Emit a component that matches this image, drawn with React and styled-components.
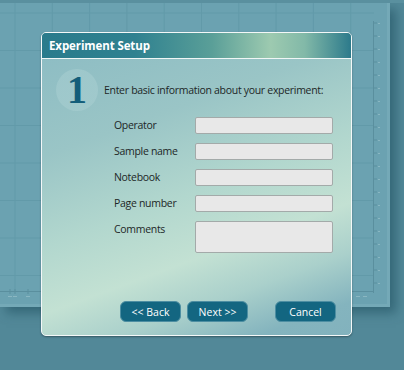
import React from 'react'
import styled, { createGlobalStyle } from 'styled-components'

const GlobalStyle = createGlobalStyle`
  html, body {
    margin: 0;
    padding: 0;
    background: #528898;
    overflow: hidden;
  }
  body {
    font-family: 'Open Sans', 'Noto Sans', sans-serif;
  }
`

const Screen = styled.div`
  position: relative;
  width: 404px;
  height: 370px;
  background: #528898;
  padding-top: 3px;
  box-sizing: border-box;
  &::before {
    content: '';
    position: absolute;
    left: 0;
    top: 0;
    width: 404px;
    height: 3px;
    background: #5a909f;
  }
`

const ChartPanel = styled.div`
  width: 390px;
  height: 304px;
  background: #6ba2b1;
  box-shadow: 6px 6px 10px rgba(40, 90, 105, 0.7);
  border-right: 3px solid #74a9b7;
  border-bottom: 3px solid #74a9b7;
  box-sizing: border-box;
`

const PlotSvg = styled.svg`
  display: block;
`

const Dialog = styled.div`
  position: absolute;
  left: 41px;
  top: 32px;
  width: 311px;
  height: 304px;
  box-sizing: border-box;
  border: 1.5px solid #f4f8f8;
  border-radius: 5px;
  overflow: hidden;
  display: flex;
  flex-direction: column;
  box-shadow: 0 1px 2px rgba(0, 0, 0, 0.35);
  background: linear-gradient(
    160deg,
    #8bbbc3 0%,
    #9ac5c6 30%,
    #b2d7ce 52%,
    #c3e1d3 68%,
    #aad0cb 80%,
    #84b4be 92%,
    #82b2bd 100%
  );
`

const TitleBar = styled.div`
  height: 25px;
  flex: none;
  display: flex;
  align-items: center;
  padding-left: 7px;
  border-bottom: 1.5px solid #f0f6f5;
  background: linear-gradient(
    90deg,
    #2a7b8c 0%,
    #2f8190 30%,
    #5a9f98 55%,
    #9dcab0 74%,
    #82b9a8 85%,
    #2c7a8b 100%
  );
  color: #ffffff;
  font-family: 'Open Sans', 'Noto Sans', sans-serif;
  font-weight: 700;
  font-size: 11.5px;
  letter-spacing: -0.1px;
`

const Body = styled.div`
  flex: 1;
  display: flex;
  flex-direction: column;
  padding: 10px 15px 13px 14px;
`

const StepRow = styled.div`
  display: flex;
  align-items: center;
  gap: 6px;
`

const StepBadge = styled.div`
  width: 42px;
  height: 42px;
  border-radius: 50%;
  background: radial-gradient(circle, rgba(170, 208, 210, 0.5) 60%, rgba(190, 220, 220, 0.3) 100%);
  display: flex;
  align-items: center;
  justify-content: center;
  color: #135e7a;
  font-family: 'Liberation Serif', 'DejaVu Serif', serif;
  font-weight: 700;
  font-size: 40px;
  line-height: 1;
`

const Prompt = styled.div`
  color: #1d2727;
  font-size: 10.5px;
  letter-spacing: -0.3px;
  white-space: nowrap;
  font-family: 'Open Sans', 'Noto Sans', sans-serif;
`

const Form = styled.div`
  display: grid;
  grid-template-columns: 81px 138px;
  row-gap: 9px;
  margin-top: 6px;
  margin-left: 58px;
`

const Label = styled.div`
  color: #1d2727;
  font-size: 10.5px;
  letter-spacing: -0.3px;
  font-family: 'Open Sans', 'Noto Sans', sans-serif;
  line-height: 17px;
`

const Field = styled.div`
  height: ${p => (p.$tall ? 32 : 17)}px;
  box-sizing: border-box;
  background: #e8e8e8;
  border: 1px solid #a3aaa9;
  border-radius: 2px;
`

const Buttons = styled.div`
  margin-top: auto;
  display: flex;
  justify-content: flex-end;
  gap: 6px;
`

const Button = styled.div`
  width: 61px;
  height: 21px;
  box-sizing: border-box;
  border-radius: 6px;
  background: #136681;
  border: 1px solid #4d8ea2;
  color: #ffffff;
  font-size: 10.5px;
  font-family: 'Open Sans', 'Noto Sans', sans-serif;
  display: flex;
  align-items: center;
  justify-content: center;
  margin-left: ${p => (p.$gapLeft ? 21 : 0)}px;
`

function PlotGrid() {
  const vLines = []
  for (let x = 15; x < 374; x += 37.3) vLines.push(x)
  const hLines = []
  for (let y = 10; y < 290; y += 37.5) hLines.push(y)
  const ticks = []
  for (let y = 20; y < 290; y += 13) ticks.push(y)
  const bTicks = [10, 15, 28, 46, 66, 90]
  return (
    <PlotSvg width="387" height="301" viewBox="0 0 387 301">
      <rect x="0" y="0" width="387" height="301" fill="#6ba2b1" />
      {vLines.map(x => (
        <line key={'v' + x} x1={x} y1="0" x2={x} y2="288" stroke="#629aa9" strokeWidth="1" />
      ))}
      {hLines.map(y => (
        <line key={'h' + y} x1="0" y1={y} x2="374" y2={y} stroke="#629aa9" strokeWidth="1" />
      ))}
      <line x1="373.5" y1="18" x2="373.5" y2="290" stroke="#5a8f9e" strokeWidth="1" />
      {ticks.map(y => (
        <g key={'t' + y}>
          <line x1="373" y1={y} x2="377" y2={y} stroke="#5a8f9e" strokeWidth="1" />
          <line x1="378" y1={y + 0.5} x2="380" y2={y + 0.5} stroke="#8ab7c2" strokeWidth="1" />
        </g>
      ))}
      <line x1="0" y1="288.5" x2="374" y2="288.5" stroke="#5a8f9e" strokeWidth="1" />
      {bTicks.map(x => (
        <g key={'b' + x}>
          <line x1={x} y1="286" x2={x} y2="291" stroke="#5a8f9e" strokeWidth="1" />
          <line x1={x - 2} y1="293.5" x2={x + 2} y2="293.5" stroke="#8ab7c2" strokeWidth="1" />
        </g>
      ))}
      {[358, 365].map(x => (
        <line key={'r' + x} x1={x - 2} y1="293.5" x2={x + 2} y2="293.5" stroke="#8ab7c2" strokeWidth="1" />
      ))}
    </PlotSvg>
  )
}

const fields = [
  { label: 'Operator' },
  { label: 'Sample name' },
  { label: 'Notebook' },
  { label: 'Page number' },
  { label: 'Comments', tall: true },
]

export default function App() {
  return (
    <Screen>
      <GlobalStyle />
      <ChartPanel>
        <PlotGrid />
      </ChartPanel>
      <Dialog>
        <TitleBar>Experiment Setup</TitleBar>
        <Body>
          <StepRow>
            <StepBadge>1</StepBadge>
            <Prompt>Enter basic information about your experiment:</Prompt>
          </StepRow>
          <Form>
            {fields.map(f => (
              <React.Fragment key={f.label}>
                <Label>{f.label}</Label>
                <Field $tall={f.tall} />
              </React.Fragment>
            ))}
          </Form>
          <Buttons>
            <Button>&lt;&lt; Back</Button>
            <Button>Next &gt;&gt;</Button>
            <Button $gapLeft>Cancel</Button>
          </Buttons>
        </Body>
      </Dialog>
    </Screen>
  )
}
